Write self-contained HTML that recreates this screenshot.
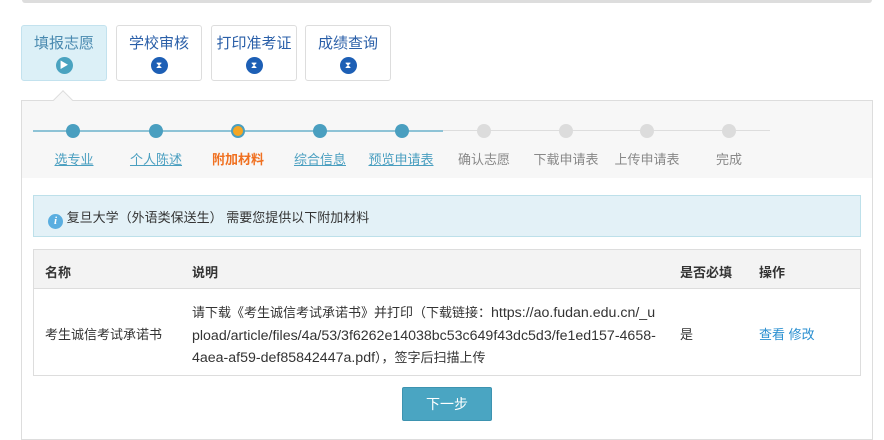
<!DOCTYPE html>
<html><head><meta charset="utf-8"><style>
*{margin:0;padding:0;box-sizing:border-box}
body{width:884px;height:433px;overflow:hidden;background:#fff;font-family:"Liberation Sans","Noto Sans CJK SC",sans-serif;font-size:13px;color:#333;position:relative}
.a{position:absolute}
.tab{position:absolute;top:25px;width:86px;height:56px;border:1px solid #ddd;border-radius:3px;background:#fff;text-align:center;color:#2a5fa8;font-size:15px;padding-top:6px}
.tab .ic{width:17px;height:17px;border-radius:50%;background:#1d5fb5;margin:4px auto 0;color:#fff;font-size:9px;line-height:17px}
.dot{position:absolute;top:124px;width:14px;height:14px;border-radius:50%;background:#4a9fc0}
.g{background:#dcdcdc}
.lb{position:absolute;top:149px;font-size:13px;color:#4a9fc0;text-decoration:underline;width:90px;text-align:center}
.lg{color:#888;text-decoration:none}
.l{font-size:14.2px}
</style></head><body>
<div class="a" style="left:22px;top:0;width:850px;height:3px;background:#ddd;border-radius:0 0 3px 3px"></div>
<div class="tab" style="left:21px;background:#dcf0f7;border-color:#c3e2ee;color:#4a8ab0">填报志愿<div class="ic" style="background:#4aa3c0">▶</div></div>
<div class="tab" style="left:116px">学校审核<div class="ic">⧗</div></div>
<div class="tab" style="left:211px">打印准考证<div class="ic">⧗</div></div>
<div class="tab" style="left:305px">成绩查询<div class="ic">⧗</div></div>
<div class="a" style="left:21px;top:100px;width:852px;height:340px;border:1px solid #ddd;background:#fff"></div>
<div class="a" style="left:22px;top:101px;width:850px;height:77px;background:#f7f7f7"></div>
<div class="a" style="left:56px;top:93px;width:14px;height:14px;background:#f7f7f7;border-left:1px solid #ddd;border-top:1px solid #ddd;transform:rotate(45deg)"></div>
<div class="a" style="left:33px;top:130px;width:410px;height:2px;background:#8ec3d6"></div>
<div class="a" style="left:443px;top:130px;width:327px;height:1px;background:#ddd"></div>
<div class="dot" style="left:66px"></div><div class="dot" style="left:149px"></div>
<div class="dot" style="left:231px;background:#f5a623;border:2px solid #4a9fc0"></div>
<div class="dot" style="left:313px"></div><div class="dot" style="left:395px"></div>
<div class="dot g" style="left:477px"></div><div class="dot g" style="left:559px"></div><div class="dot g" style="left:640px"></div><div class="dot g" style="left:722px"></div>
<div class="lb" style="left:29px">选专业</div>
<div class="lb" style="left:111px">个人陈述</div>
<div class="lb" style="left:193px;color:#f07020;text-decoration:none;font-weight:bold">附加材料</div>
<div class="lb" style="left:275px">综合信息</div>
<div class="lb" style="left:356px">预览申请表</div>
<div class="lb lg" style="left:439px">确认志愿</div>
<div class="lb lg" style="left:521px">下载申请表</div>
<div class="lb lg" style="left:602px">上传申请表</div>
<div class="lb lg" style="left:684px">完成</div>
<div class="a" style="left:33px;top:195px;width:828px;height:42px;background:#e3f1f7;border:1px solid #bde0ea;padding:11px 0 0 14px;color:#333">
<span style="display:inline-block;width:15px;height:15px;border-radius:50%;background:#5aaee0;color:#fff;font-size:11px;line-height:15px;text-align:center;font-style:italic;font-weight:bold;vertical-align:-2px;font-family:'Liberation Serif',serif">i</span> 复旦大学（外语类保送生） 需要您提供以下附加材料</div>
<div class="a" style="left:33px;top:249px;width:828px;height:127px;border:1px solid #ddd">
<div class="a" style="left:0;top:0;width:826px;height:39px;background:#f3f3f3;border-bottom:1px solid #ddd"></div>
<div class="a" style="left:11px;top:12px;font-weight:bold">名称</div>
<div class="a" style="left:158px;top:12px;font-weight:bold">说明</div>
<div class="a" style="left:646px;top:12px;font-weight:bold">是否必填</div>
<div class="a" style="left:725px;top:12px;font-weight:bold">操作</div>
<div class="a" style="left:11px;top:74px">考生诚信考试承诺书</div>
<div class="a" style="left:158px;top:52px;line-height:22.5px;white-space:nowrap">请下载《考生诚信考试承诺书》并打印（下载链接：<span class="l">https://ao.fudan.edu.cn/_u</span><br><span class="l">pload/article/files/4a/53/3f6262e14038bc53c649f43dc5d3/fe1ed157-4658-</span><br><span class="l">4aea-af59-def85842447a.pdf</span>），签字后扫描上传</div>
<div class="a" style="left:646px;top:74px">是</div>
<div class="a" style="left:725px;top:74px;color:#2a8fd0">查看 修改</div>
</div>
<div class="a" style="left:402px;top:387px;width:90px;height:34px;background:#4aa5c2;border:1px solid #3d93b0;border-radius:2px;color:#fff;font-size:14px;text-align:center;line-height:32px">下一步</div>
</body></html>
